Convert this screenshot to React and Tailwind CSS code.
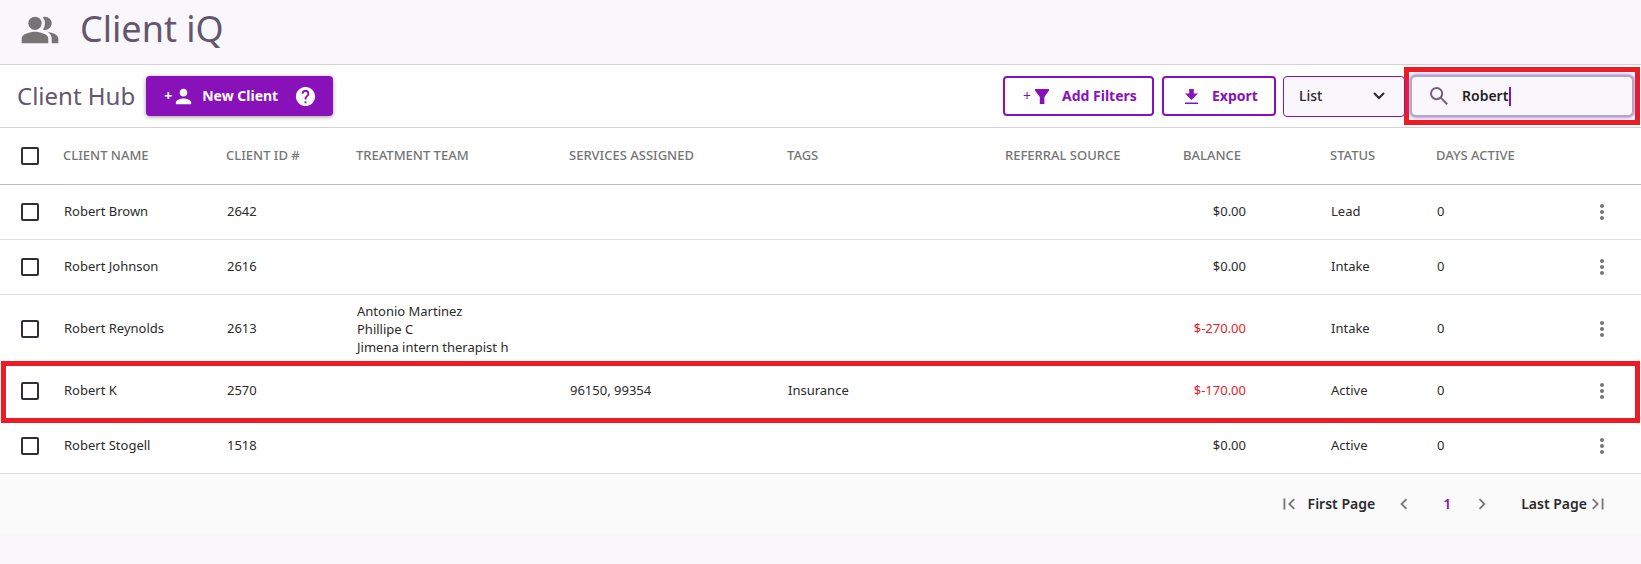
import { MdPeopleAlt, MdPerson, MdHelp, MdMoreVert, MdFirstPage, MdLastPage, MdChevronLeft, MdChevronRight } from "react-icons/md";

const clients = [
  { name: "Robert Brown", id: "2642", team: [], services: "", tags: "", balance: "$0.00", status: "Lead" },
  { name: "Robert Johnson", id: "2616", team: [], services: "", tags: "", balance: "$0.00", status: "Intake" },
  { name: "Robert Reynolds", id: "2613", team: ["Antonio Martinez", "Phillipe C", "Jimena intern therapist h"], services: "", tags: "", balance: "$-270.00", status: "Intake" },
  { name: "Robert K", id: "2570", team: [], services: "96150, 99354", tags: "Insurance", balance: "$-170.00", status: "Active", marked: true },
  { name: "Robert Stogell", id: "1518", team: [], services: "", tags: "", balance: "$0.00", status: "Active" },
];

function FunnelIcon({ className }) {
  return (
    <svg viewBox="0 0 14 15" className={className} fill="currentColor" aria-hidden="true">
      <path d="M0 0h14v1.6L9.4 8v7H4.8V8L0 1.6z" />
    </svg>
  );
}

function DownloadIcon({ className }) {
  return (
    <svg viewBox="0 0 13 15" className={className} fill="currentColor" aria-hidden="true">
      <path d="M4.2 0h4.6v4.6H13L6.5 11 0 4.6h4.2zM0 13.6h13V15H0z" />
    </svg>
  );
}

function SearchIcon({ className }) {
  return (
    <svg viewBox="0 0 18 18" className={className} fill="none" stroke="currentColor" strokeWidth="2" aria-hidden="true">
      <circle cx="6.6" cy="6.6" r="5.6" />
      <path d="M10.6 10.6l6.6 6.6" />
    </svg>
  );
}

function Tick({ label }) {
  return <input type="checkbox" aria-label={label} className="block size-[18px] ml-[21px] appearance-none rounded-xs border-2 border-[#322b38] bg-white" />;
}

function Header() {
  return (
    <header className="flex h-[65px] items-start gap-5 border-b border-[#d3d3d6] pl-5">
      <MdPeopleAlt className="mt-2.5 size-10 text-[#757575]" />
      <h1 className="text-[36px] leading-[58px] text-[#63566d]">Client iQ</h1>
    </header>
  );
}

function Toolbar() {
  return (
    <div className="flex h-[63px] items-center border-b border-[#d3d3d6] bg-white pl-[17px] pr-px">
      <h2 className="whitespace-nowrap text-2xl text-[#63566d]">Client Hub</h2>
      <button className="ml-[11px] flex h-10 w-[187px] items-center rounded-sm bg-[#8911b9] pl-[18px] text-sm font-bold text-white shadow-[0_1px_4px_rgba(0,0,0,0.4)]">
        <span>+</span>
        <MdPerson className="size-[23px]" />
        <span className="ml-[7px]">New Client</span>
        <MdHelp className="ml-auto mr-4 size-[23px]" />
      </button>
      <div className="ml-auto flex items-center">
        <button className="flex h-10 w-[151px] items-center rounded-sm border-2 border-[#8911b9] pl-[18px] text-sm font-bold text-[#8911b9]">
          <span className="font-normal">+</span>
          <FunnelIcon className="ml-1 h-[15px] w-3.5" />
          <span className="ml-[13px]">Add Filters</span>
        </button>
        <button className="ml-2 flex h-10 w-[114px] items-center gap-3.5 rounded-sm border-2 border-[#8911b9] pl-[21px] text-sm font-bold text-[#8911b9]">
          <DownloadIcon className="h-[15px] w-[13px]" />
          Export
        </button>
        <label className="relative ml-[7px] block">
          <select aria-label="View" className="block h-[41px] w-[122px] appearance-none rounded-sm border border-[#8911b9] bg-[#f9f7fb] pl-[15px] text-sm font-medium text-[#2c2630]">
            <option>List</option>
          </select>
          <svg viewBox="0 0 12 8" className="pointer-events-none absolute right-5 top-4 h-2 w-3 text-[#2c2630]" fill="none" stroke="currentColor" strokeWidth="2" aria-hidden="true">
            <path d="M1 1l5 5 5-5" />
          </svg>
        </label>
        <div className="-ml-px h-[58px] w-[236px] border-[5px] border-[#ed1c24] px-px py-[3px]">
          <label className="flex h-[42px] items-center rounded-md border-2 border-[#b3a8b9] bg-[#f9f7fb] pl-[18px] shadow-[0_0_3px_1px_rgba(150,60,210,0.6)]">
            <SearchIcon className="size-[18px] shrink-0 text-[#75607a]" />
            <input aria-label="Search" defaultValue="Robert" size={5} className="ml-3.5 h-[19px] w-[49px] border-r-2 border-[#8911b9] bg-transparent text-sm font-semibold text-[#222222] outline-none" />
          </label>
        </div>
      </div>
    </div>
  );
}

function ClientTable() {
  return (
    <table className="w-full table-fixed border-collapse bg-white text-left text-[13px] text-[#2b2b2b]">
      <colgroup>
        <col className="w-[63px]" />
        <col className="w-[163px]" />
        <col className="w-[130px]" />
        <col className="w-[213px]" />
        <col className="w-[218px]" />
        <col className="w-[218px]" />
        <col className="w-[178px]" />
        <col className="w-[147px]" />
        <col className="w-[106px]" />
        <col className="w-[126px]" />
        <col className="w-[79px]" />
      </colgroup>
      <thead>
        <tr className="h-14 border-b border-[#bdbdbd] text-[#757575] [&>th]:font-medium">
          <th><Tick label="Select all clients" /></th>
          <th>CLIENT NAME</th>
          <th>CLIENT ID #</th>
          <th>TREATMENT TEAM</th>
          <th>SERVICES ASSIGNED</th>
          <th>TAGS</th>
          <th>REFERRAL SOURCE</th>
          <th>BALANCE</th>
          <th>STATUS</th>
          <th>DAYS ACTIVE</th>
          <th aria-label="Actions" />
        </tr>
      </thead>
      <tbody>
        {clients.map((c) => (
          <tr key={c.id} className="relative h-[55px] border-b border-[#dedede] [&>td]:pl-px">
            <td className="pl-0!">
              <Tick label={`Select ${c.name}`} />
              {c.marked && <span className="pointer-events-none absolute inset-x-px -top-[2px] -bottom-[6px] z-10 border-[5px] border-[#ed1c24]" />}
            </td>
            <td>{c.name}</td>
            <td>{c.id}</td>
            <td className={c.team.length ? "py-[7px] leading-[18px]" : ""}>
              {c.team.map((t) => <div key={t}>{t}</div>)}
            </td>
            <td>{c.services}</td>
            <td>{c.tags}</td>
            <td />
            <td className={c.balance.includes("-") ? "pr-[84px] text-right text-[#e0232b]" : "pr-[84px] text-right"}>{c.balance}</td>
            <td>{c.status}</td>
            <td>0</td>
            <td>
              <button aria-label={`Actions for ${c.name}`} className="mx-auto block text-[#757575]"><MdMoreVert className="size-6" /></button>
            </td>
          </tr>
        ))}
      </tbody>
    </table>
  );
}

function Pager() {
  return (
    <nav aria-label="Pages" className="flex h-[60px] items-center justify-end bg-[#fafafa] pr-8 text-sm font-semibold text-[#2b2b2b]">
      <button className="flex items-center gap-2"><MdFirstPage className="size-[22px] text-[#757575]" />First Page</button>
      <button aria-label="Previous page" className="ml-[18px] text-[#757575]"><MdChevronLeft className="size-[22px]" /></button>
      <button aria-current="page" className="ml-7 mr-5 text-[#8911b9]">1</button>
      <button aria-label="Next page" className="text-[#757575]"><MdChevronRight className="size-[22px]" /></button>
      <button className="ml-7 flex items-center">Last Page<MdLastPage className="size-[22px] text-[#757575]" /></button>
    </nav>
  );
}

export default function App() {
  return (
    <div className="min-h-screen bg-[#f9f7fb] font-['Noto_Sans',sans-serif]">
      <Header />
      <Toolbar />
      <ClientTable />
      <Pager />
    </div>
  );
}
